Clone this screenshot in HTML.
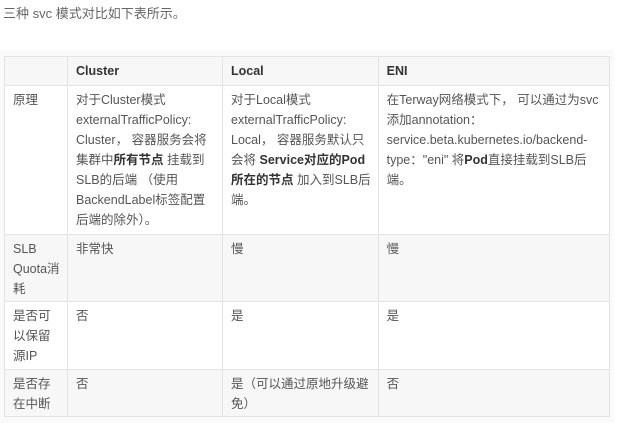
<!DOCTYPE html>
<html><head><meta charset="utf-8"><style>
html,body{margin:0;padding:0;background:#fff;width:618px;height:423px;overflow:hidden}
body{font-family:"Liberation Sans","Noto Sans CJK SC",sans-serif;color:#555;}
.t{position:absolute;left:3px;top:3px;font-size:13px;color:#666}
.box{position:absolute;left:0;top:50px;width:614px;height:373px;background:#fafafa}
table{position:absolute;left:4px;top:56px;border-collapse:collapse;font-size:12.5px;line-height:20px;table-layout:fixed}
td{border:1px solid #e3e3e3;vertical-align:top;padding:4px 7px 1px 8px;white-space:nowrap;background:#fff}
tr.g td{background:#f7f7f7}
th{border:1px solid #e3e3e3;background:#f7f7f7;text-align:left;padding:4px 8px;font-weight:bold;color:#333;height:18px}
b{color:#333}
</style></head><body>
<div class="t">三种 svc 模式对比如下表所示。</div>
<div class="box"></div>
<table>
<colgroup><col style="width:63px"><col style="width:155px"><col style="width:155px"><col style="width:231px"></colgroup>
<tr><th></th><th>Cluster</th><th>Local</th><th>ENI</th></tr>
<tr style="height:149px"><td>原理</td><td>对于Cluster模式<br>externalTrafficPolicy:<br>Cluster， 容器服务会将<br>集群中<b>所有节点</b> 挂载到<br>SLB的后端 （使用<br>BackendLabel标签配置<br>后端的除外）。</td><td>对于Local模式<br>externalTrafficPolicy:<br>Local， 容器服务默认只<br>会将 <b>Service对应的Pod</b><br><b>所在的节点</b> 加入到SLB后<br>端。</td><td>在Terway网络模式下， 可以通过为svc<br>添加annotation：<br>service.beta.kubernetes.io/backend-<br>type："eni" 将<b>Pod</b>直接挂载到SLB后<br>端。</td></tr>
<tr class="g" style="height:67px"><td>SLB<br>Quota消<br>耗</td><td>非常快</td><td>慢</td><td>慢</td></tr>
<tr style="height:68px"><td>是否可<br>以保留<br>源IP</td><td>否</td><td>是</td><td>是</td></tr>
<tr class="g" style="height:47px"><td>是否存<br>在中断</td><td>否</td><td>是（可以通过原地升级避<br>免）</td><td>否</td></tr>
</table>
</body></html>
